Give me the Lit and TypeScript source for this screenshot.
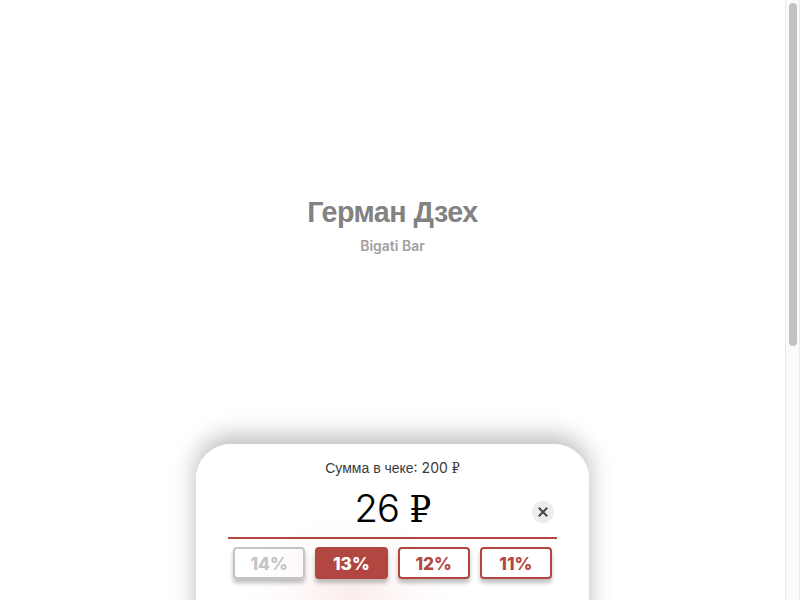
import { LitElement, html, css } from "lit";
import { customElement, state } from "lit/decorators.js";
import { classMap } from "lit/directives/class-map.js";

@customElement("app-root")
export class AppRoot extends LitElement {
  static styles = css`
    :host {
      display: flex;
      width: 800px;
      height: 600px;
      overflow: hidden;
      background: #fff;
      font-family: Inter, "Liberation Sans", sans-serif;
    }
    * { box-sizing: border-box; }
    .page {
      width: 785px;
      height: 600px;
      display: flex;
      flex-direction: column;
      align-items: center;
      overflow: hidden;
    }
    .person {
      height: 444px;
      flex: none;
      padding-top: 195px;
      text-align: center;
    }
    .name {
      margin: 0;
      font-family: "Liberation Sans", Arial, sans-serif;
      font-size: 28.7px;
      line-height: 34px;
      letter-spacing: -0.55px;
      font-weight: 700;
      color: #828282;
    }
    .place {
      margin-top: 8px;
      font-size: 14px;
      line-height: 17px;
      font-weight: 600;
      color: #a0a0a0;
    }
    .card {
      width: 393px;
      height: 300px;
      flex: none;
      padding: 15px 32px 0;
      border-radius: 35px 35px 0 0;
      background: radial-gradient(ellipse 105px 90px at 155px 157px, #faecea 0%, #fcf5f4 35%, #fefcfb 70%, #fff 100%);
      box-shadow: 0 -8px 24px rgba(0, 0, 0, 0.27);
    }
    .bill {
      height: 18px;
      text-align: center;
      font-size: 14px;
      line-height: 18px;
      color: #3a3a3a;
    }
    .caption { font-family: "Liberation Sans", Arial, sans-serif; }
    .currency {
      font-family: "DejaVu Serif Condensed", "DejaVu Serif", serif;
      font-stretch: condensed;
      font-weight: 400;
      line-height: 1;
    }
    .amount {
      height: 62px;
      display: grid;
      grid-template-columns: 40px 1fr 40px;
      align-items: center;
      border-bottom: 2px solid #b24742;
    }
    .value {
      grid-column: 2;
      height: 46px;
      margin-top: 2px;
      text-align: center;
      font-size: 38px;
      line-height: 46px;
      font-weight: 300;
      letter-spacing: -0.6px;
      -webkit-text-stroke: 0.2px #000;
      color: #000;
    }
    .value .currency { -webkit-text-stroke: 0; }
    .clear {
      width: 22px;
      height: 22px;
      margin: 9px 0 0 15px;
      padding: 0;
      border: 0;
      border-radius: 50%;
      background: #ededed;
    }
    .clear svg { display: block; }
    .rates {
      display: flex;
      gap: 10px;
      padding: 8px 5px 0;
    }
    .rate {
      flex: 1;
      height: 32px;
      padding: 2px 0 0;
      border: 2px solid #b24742;
      border-radius: 4px;
      background: #fff;
      color: #b24742;
      font: 800 17.3px/26px Inter, sans-serif;
      box-shadow: 0 4px 4px rgba(0, 0, 0, 0.25);
    }
    .rate.selected { background: #b24742; color: #fff; }
    .rate.disabled {
      border-color: #c4c4c4;
      color: #c4c4c4;
      background: linear-gradient(90deg, #fff 30%, #fdf9f9);
    }
    .track {
      width: 15px;
      height: 600px;
      padding: 3px 0 0 3px;
      border-left: 1px solid #e8e8e8;
      border-right: 1px solid #ededed;
      background: #fafafa;
    }
    .thumb {
      width: 8px;
      height: 343px;
      border-radius: 4px;
      background: #c1c1c1;
    }
  `;

  @state() private rates = [14, 13, 12, 11];
  @state() private selected = 13;
  @state() private bill = 200;

  render() {
    const tip = Math.round((this.bill * this.selected) / 100);
    return html`
      <main class="page">
        <header class="person">
          <h1 class="name">Герман Дзех</h1>
          <div class="place">Bigati Bar</div>
        </header>
        <section class="card">
          <div class="bill"><span class="caption">Сумма в чеке</span>: ${this.bill} <span class="currency">₽</span></div>
          <div class="amount">
            <div class="value">${tip} <span class="currency">₽</span></div>
            <button class="clear" aria-label="Очистить">
              <svg width="22" height="22" viewBox="0 0 22 22">
                <path d="M6.8 6.8L15.2 15.2M15.2 6.8L6.8 15.2" stroke="#444" stroke-width="2" fill="none" />
              </svg>
            </button>
          </div>
          <div class="rates">
            ${this.rates.map(
              (r) => html`<button
                class=${classMap({ rate: true, selected: r === this.selected, disabled: r === 14 })}
                @click=${() => (this.selected = r)}
              >${r}%</button>`
            )}
          </div>
        </section>
      </main>
      <div class="track"><div class="thumb"></div></div>
    `;
  }
}
